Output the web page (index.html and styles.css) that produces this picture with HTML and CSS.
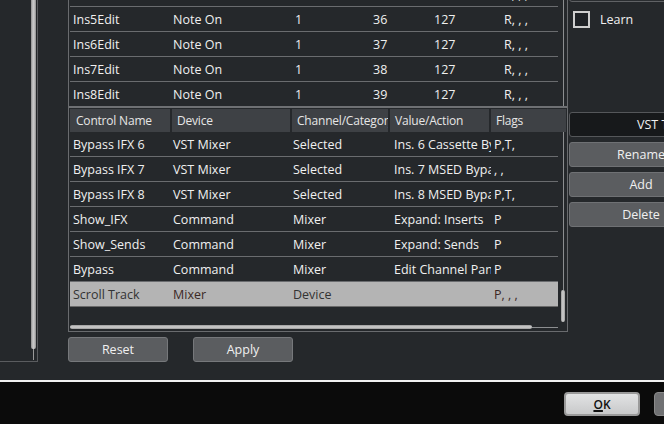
FILE: index.html
```html
<!DOCTYPE html>
<html>
<head>
<meta charset="utf-8">
<link rel="stylesheet" href="styles.css">
</head>
<body>
<div class="dialog">
  <div class="left-panel">
    <div class="lp-thumb"></div>
    <div class="lp-track"></div>
  </div>
  <div class="main">
    <div class="tbox">
      <div class="top-sec">
        <div class="top-rows">
          <div class="trow"><span class="t1">Ins4Edit</span><span class="t2">Note On</span><span class="t3">1</span><span class="t4">35</span><span class="t5">127</span><span class="t6">R, , ,</span></div>
          <div class="trow"><span class="t1">Ins5Edit</span><span class="t2">Note On</span><span class="t3">1</span><span class="t4">36</span><span class="t5">127</span><span class="t6">R, , ,</span></div>
          <div class="trow"><span class="t1">Ins6Edit</span><span class="t2">Note On</span><span class="t3">1</span><span class="t4">37</span><span class="t5">127</span><span class="t6">R, , ,</span></div>
          <div class="trow"><span class="t1">Ins7Edit</span><span class="t2">Note On</span><span class="t3">1</span><span class="t4">38</span><span class="t5">127</span><span class="t6">R, , ,</span></div>
          <div class="trow last"><span class="t1">Ins8Edit</span><span class="t2">Note On</span><span class="t3">1</span><span class="t4">39</span><span class="t5">127</span><span class="t6">R, , ,</span></div>
        </div>
        <div class="vscroll-top"><div class="vline-full"></div></div>
      </div>
      <div class="divider"></div>
      <div class="header">
        <div class="h h1">Control Name</div>
        <div class="h h2">Device</div>
        <div class="h h3">Channel/Category</div>
        <div class="h h4">Value/Action</div>
        <div class="h h5">Flags</div>
      </div>
      <div class="lower-body">
        <div class="lower-rows">
          <div class="row"><span class="c1">Bypass IFX 6</span><span class="c2">VST Mixer</span><span class="c3">Selected</span><span class="c4">Ins. 6 Cassette Bypass</span><span class="c5">P,T,</span></div>
          <div class="row"><span class="c1">Bypass IFX 7</span><span class="c2">VST Mixer</span><span class="c3">Selected</span><span class="c4">Ins. 7 MSED Bypass</span><span class="c5">, ,</span></div>
          <div class="row"><span class="c1">Bypass IFX 8</span><span class="c2">VST Mixer</span><span class="c3">Selected</span><span class="c4">Ins. 8 MSED Bypass</span><span class="c5">P,T,</span></div>
          <div class="row"><span class="c1">Show_IFX</span><span class="c2">Command</span><span class="c3">Mixer</span><span class="c4">Expand: Inserts</span><span class="c5">P</span></div>
          <div class="row"><span class="c1">Show_Sends</span><span class="c2">Command</span><span class="c3">Mixer</span><span class="c4">Expand: Sends</span><span class="c5">P</span></div>
          <div class="row"><span class="c1">Bypass</span><span class="c2">Command</span><span class="c3">Mixer</span><span class="c4">Edit Channel Panner</span><span class="c5">P</span></div>
          <div class="row selected"><span class="c1">Scroll Track</span><span class="c2 red">Mixer</span><span class="c3">Device</span><span class="c4"></span><span class="c5 red">P, , ,</span></div>
          <div class="hscroll"><div class="hthumb"></div><div class="hline"></div></div>
        </div>
        <div class="vscroll"><div class="vline"></div><div class="vthumb"></div></div>
      </div>
    </div>
    <div class="btn-row">
      <button class="btn">Reset</button>
      <button class="btn">Apply</button>
    </div>
  </div>
  <div class="right">
    <div class="field-top"></div>
    <div class="learn">
      <span class="checkbox"></span>
      <span class="learn-label">Learn</span>
    </div>
    <div class="vst-field">VST Transport</div>
    <button class="rbtn">Rename</button>
    <button class="rbtn">Add</button>
    <button class="rbtn">Delete</button>
  </div>
</div>
<div class="white-line"></div>
<div class="footer">
  <button class="ok"><u>O</u>K</button>
  <button class="cancel">Cancel</button>
</div>
</body>
</html>
```
FILE: styles.css
```css
* { box-sizing: border-box; }
html, body {
  margin: 0;
  padding: 0;
}
body {
  width: 664px;
  height: 424px;
  overflow: hidden;
  background: #0b0b0b;
  font-family: "Open Sans", "Noto Sans", sans-serif;
  font-size: 12.5px;
  color: #f0f0f0;
}
.dialog {
  height: 380px;
  background: #25282b;
  display: flex;
  align-items: flex-start;
}
.left-panel {
  width: 38px;
  height: 362px;
  border-right: 1px solid #5a5c5f;
  border-bottom: 1px solid #5a5c5f;
  display: flex;
  flex-direction: column;
  margin-right: 30px;
  flex: none;
}
.lp-thumb {
  width: 5px;
  height: 349px;
  margin-left: 31px;
  background: linear-gradient(to right, #8e8e8e, #c8c8c8 40%, #c8c8c8 60%, #8e8e8e);
  border-radius: 0 0 2px 2px;
}
.lp-track {
  width: 1px;
  height: 11px;
  margin-left: 33px;
  background: #9a9a9a;
}
.main {
  width: 500px;
  flex: none;
  display: flex;
  flex-direction: column;
}
.tbox {
  height: 332px;
  border-left: 1px solid #696b6e;
  border-right: 1px solid #696b6e;
  border-bottom: 1px solid #696b6e;
  display: flex;
  flex-direction: column;
}
.top-sec {
  height: 106px;
  overflow: hidden;
  display: flex;
}
.top-rows {
  width: 489px;
  padding-left: 1px;
  margin-top: -18px;
}
.trow, .row {
  display: flex;
  height: 25px;
  align-items: center;
  border-bottom: 1px solid #6a6c6f;
  white-space: nowrap;
}
.trow.last { border-bottom: none; }
.trow span, .row span {
  overflow: hidden;
  flex: none;
  padding-left: 3px;
}
.t1 { width: 100px; }
.t2 { width: 120px; }
.t3 { width: 78px; padding-left: 5px !important; }
.t4 { width: 61px; padding-left: 5px !important; }
.t5 { width: 70px; padding-left: 5px !important; }
.t6 { width: 59px; padding-left: 5px !important; }
.vscroll-top {
  width: 9px;
  display: flex;
}
.vline-full {
  width: 1px;
  margin-left: 5px;
  background: #8c8e90;
}
.divider {
  height: 2px;
  background: #6e7073;
  margin-bottom: 1px;
}
.header {
  height: 23px;
  margin-left: 1px;
  margin-right: 1px;
  display: flex;
  background: #3e4145;
  white-space: nowrap;
  font-size: 12px;
}
.h {
  flex: none;
  display: flex;
  align-items: center;
  padding-left: 5px;
  overflow: hidden;
  border-right: 2px solid #25282b;
  color: #e6e6e6;
  letter-spacing: -0.2px;
}
.h1 { width: 102px; padding-left: 6px; }
.h2 { width: 120px; }
.h3 { width: 98px; }
.h4 { width: 101px; }
.h5 { flex: 1; border-right: none; }
.lower-body {
  display: flex;
  flex: 1;
}
.lower-rows {
  width: 489px;
  padding-left: 1px;
  display: flex;
  flex-direction: column;
}
.c1 { width: 100px; }
.c2 { width: 120px; }
.c3 { width: 100px; }
.c4 { width: 101px; padding-left: 4px !important; }
.c5 { width: 67px; }
.row.selected {
  background: #b4b4b4;
  color: #333333;
  border-bottom-color: #6a6a6a;
}
.row.selected .red { color: #3c2a26; }
.hscroll {
  margin-top: 18px;
  height: 4px;
  display: flex;
  align-items: center;
}
.hthumb {
  width: 462px;
  height: 4px;
  border-radius: 2px;
  background: linear-gradient(to bottom, #9a9a9a, #d0d0d0 50%, #9a9a9a);
}
.hline {
  flex: 1;
  height: 1px;
  background: #8c8e90;
}
.vscroll {
  width: 9px;
  display: flex;
  flex-direction: column;
}
.vline {
  width: 1px;
  height: 158px;
  margin-left: 5px;
  background: #8c8e90;
}
.vthumb {
  width: 4px;
  height: 32px;
  margin-left: 3px;
  border-radius: 2px;
  background: linear-gradient(to right, #9a9a9a, #d0d0d0 50%, #9a9a9a);
}
.btn-row {
  display: flex;
  gap: 25px;
  margin-top: 5px;
}
.btn {
  width: 100px;
  height: 25px;
  background: #5b5d60;
  border: 1px solid #76787b;
  border-radius: 3px;
  color: #f0f0f0;
  font-family: inherit;
  font-size: 12.5px;
  padding: 0;
}
.right {
  margin-left: 1px;
  width: 95px;
  flex: none;
  overflow: hidden;
  display: flex;
  flex-direction: column;
}
.field-top {
  width: 144px;
  height: 12px;
  margin-top: -10px;
  border: 1px solid #606265;
  border-radius: 3px;
  background: #2a2d30;
  flex: none;
}
.learn {
  display: flex;
  align-items: center;
  margin-top: 9px;
  margin-left: 4px;
  gap: 10px;
}
.checkbox {
  width: 17px;
  height: 17px;
  border: 2px solid #cfcfcf;
  background: #1f2226;
  flex: none;
}
.learn-label { color: #f0f0f0; }
.vst-field {
  width: 144px;
  height: 25px;
  flex: none;
  margin-top: 84px;
  background: #17191b;
  border: 1px solid #55575a;
  border-radius: 3px;
  padding-left: 67px;
  line-height: 23px;
  white-space: nowrap;
  color: #f0f0f0;
}
.rbtn {
  width: 144px;
  height: 25px;
  flex: none;
  margin-top: 5px;
  background: #5b5d60;
  border: 1px solid #6f7174;
  border-radius: 3px;
  color: #f0f0f0;
  font-family: inherit;
  font-size: 12.5px;
  padding: 0;
  text-align: center;
}
.white-line {
  height: 2px;
  background: #f2f2f2;
}
.footer {
  height: 42px;
  background: #0b0b0b;
  display: flex;
  padding-left: 564px;
  padding-top: 10px;
  gap: 14px;
}
.ok, .cancel {
  width: 76px;
  height: 24px;
  flex: none;
  border-radius: 4px;
  font-family: inherit;
  font-size: 12px;
  padding: 0;
}
.ok {
  border: 2px solid #9a9a9a;
  background: linear-gradient(to bottom, #e2e3e4, #c8c9ca);
  color: #111111;
  font-weight: 600;
}
.ok u { text-decoration-thickness: 2px; }
.cancel {
  border: 1px solid #8a8a8a;
  background: #707173;
  color: #111111;
}
```
